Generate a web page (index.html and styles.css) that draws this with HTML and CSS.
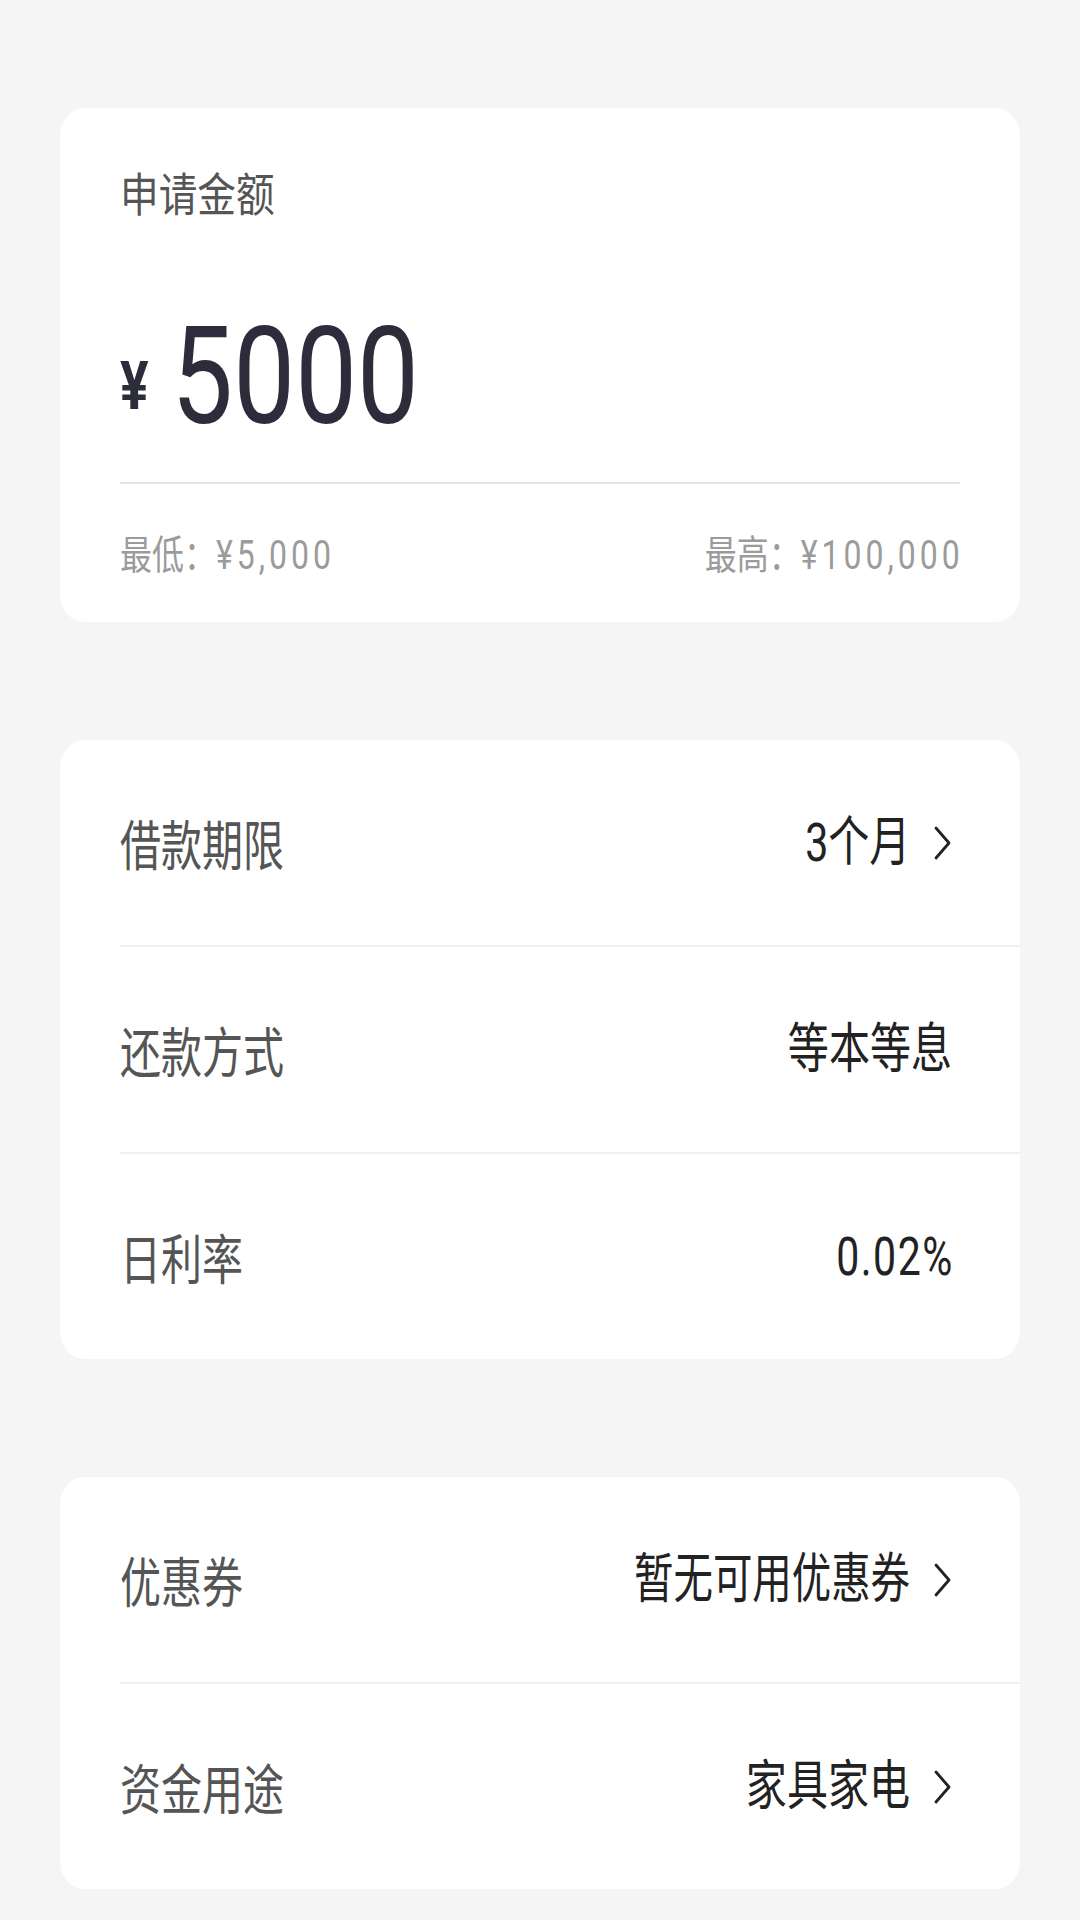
FILE: index.html
```html
<!DOCTYPE html>
<html lang="zh-CN">
<head>
<meta charset="utf-8">
<title>申请借款</title>
<link rel="stylesheet" href="styles.css">
</head>
<body>
<main class="page">
  <section class="card amount-card">
    <div class="title"><span class="title-text">申请金额</span></div>
    <div class="amount">
      <span class="yen">¥</span>
      <span class="digits">5000</span>
    </div>
    <div class="divider"></div>
    <div class="limits">
      <span class="lim lim-left">最低：<span class="num">¥5,000</span></span>
      <span class="lim lim-right">最高：<span class="num">¥100,000</span></span>
    </div>
  </section>

  <section class="card list-card">
    <div class="row">
      <span class="label">借款期限</span>
      <div class="val">
        <span class="vtext">3个月</span>
        <svg class="chev" viewBox="0 0 20 36"><polyline points="4,3 17,18 4,33"/></svg>
      </div>
    </div>
    <div class="row">
      <span class="label">还款方式</span>
      <div class="val">
        <span class="vtext">等本等息</span>
      </div>
    </div>
    <div class="row">
      <span class="label">日利率</span>
      <div class="val">
        <span class="vtext vnum">0.02%</span>
      </div>
    </div>
  </section>

  <section class="card list-card">
    <div class="row">
      <span class="label">优惠券</span>
      <div class="val">
        <span class="vtext vlong">暂无可用优惠券</span>
        <svg class="chev" viewBox="0 0 20 36"><polyline points="4,3 17,18 4,33"/></svg>
      </div>
    </div>
    <div class="row">
      <span class="label">资金用途</span>
      <div class="val">
        <span class="vtext">家具家电</span>
        <svg class="chev" viewBox="0 0 20 36"><polyline points="4,3 17,18 4,33"/></svg>
      </div>
    </div>
  </section>
</main>
</body>
</html>
```

FILE: styles.css
```css
* {
  box-sizing: border-box;
}

html, body {
  margin: 0;
  padding: 0;
  background: #f5f5f5;
}

body {
  font-family: Roboto, "Noto Sans CJK SC", "Noto Sans", sans-serif;
  width: 1080px;
  min-height: 1920px;
}

.page {
  display: flex;
  flex-direction: column;
  gap: 118px;
  padding: 108px 60px 0 60px;
}

.card {
  background: #ffffff;
  border-radius: 24px / 28px;
  overflow: hidden;
}

/* ---------- amount card ---------- */
.amount-card {
  display: flex;
  flex-direction: column;
  padding: 57px 60px 42px 60px;
}

.title {
  height: 52px;
  line-height: 52px;
  display: flex;
}

.title-text {
  font-family: "Noto Sans CJK SC", sans-serif;
  font-size: 46px;
  color: #555555;
  white-space: nowrap;
  transform: scaleX(0.84);
  transform-origin: left center;
}

.amount {
  margin-top: 85px;
  height: 150px;
  display: flex;
  align-items: center;
  transform: scaleX(0.81);
  transform-origin: left center;
  color: #2d2c3b;
}

.yen {
  font-family: Roboto, sans-serif;
  font-weight: 700;
  font-size: 66px;
  line-height: 1;
  margin-top: 20px;
  margin-right: 28px;
}

.digits {
  font-family: Roboto, sans-serif;
  font-weight: 400;
  font-size: 136px;
  line-height: 150px;
}

.divider {
  margin-top: 30px;
  height: 2px;
  background: #e2e2e2;
}

.limits {
  margin-top: 48px;
  height: 48px;
  line-height: 48px;
  display: flex;
  justify-content: space-between;
}

.lim {
  font-size: 40px;
  color: #9b9b9b;
  white-space: nowrap;
  transform: scaleX(0.8);
}

.lim-left {
  transform-origin: left center;
}

.lim-right {
  transform-origin: right center;
}

.num {
  letter-spacing: 5px;
}

.lim-right .num {
  margin-right: -5px;
}

/* ---------- list cards ---------- */
.row {
  height: 205px;
  margin-left: 60px;
  padding-right: 68px;
  display: flex;
  align-items: center;
  justify-content: space-between;
  box-sizing: content-box;
}

.row + .row {
  border-top: 2px solid #efefef;
}

.label {
  font-family: "Noto Sans CJK SC", sans-serif;
  font-size: 54px;
  line-height: 60px;
  color: #555555;
  white-space: nowrap;
  transform: scaleX(0.76);
  transform-origin: left center;
}

.val {
  display: flex;
  align-items: center;
  justify-content: flex-end;
}

.vtext {
  font-size: 54px;
  line-height: 60px;
  color: #222222;
  white-space: nowrap;
  transform: scaleX(0.76);
  transform-origin: right center;
}

.vlong {
  transform: scaleX(0.73);
}

.vnum {
  letter-spacing: 2px;
  margin-right: -2px;
}

.chev {
  width: 20px;
  height: 36px;
  margin-left: 22px;
  flex: none;
}

.chev polyline {
  fill: none;
  stroke: #222222;
  stroke-width: 2.8;
  stroke-linecap: round;
  stroke-linejoin: round;
}
```
